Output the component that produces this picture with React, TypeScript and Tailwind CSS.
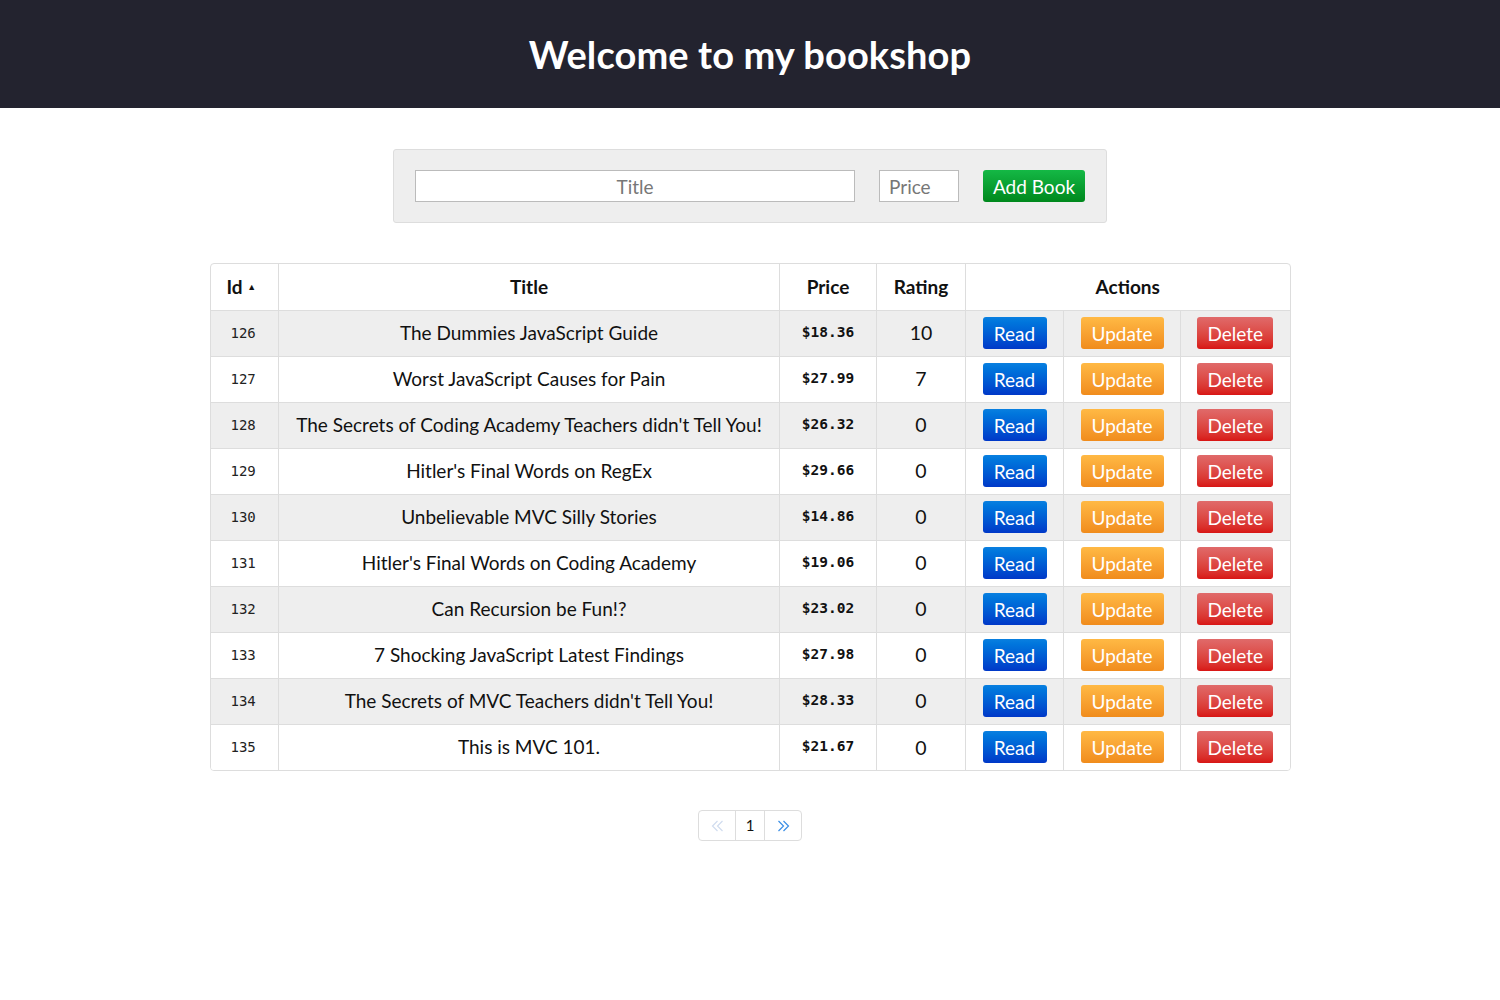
import React from "react";

const books = [
  { id: 126, title: "The Dummies JavaScript Guide", price: "$18.36", rating: 10 },
  { id: 127, title: "Worst JavaScript Causes for Pain", price: "$27.99", rating: 7 },
  { id: 128, title: "The Secrets of Coding Academy Teachers didn't Tell You!", price: "$26.32", rating: 0 },
  { id: 129, title: "Hitler's Final Words on RegEx", price: "$29.66", rating: 0 },
  { id: 130, title: "Unbelievable MVC Silly Stories", price: "$14.86", rating: 0 },
  { id: 131, title: "Hitler's Final Words on Coding Academy", price: "$19.06", rating: 0 },
  { id: 132, title: "Can Recursion be Fun!?", price: "$23.02", rating: 0 },
  { id: 133, title: "7 Shocking JavaScript Latest Findings", price: "$27.98", rating: 0 },
  { id: 134, title: "The Secrets of MVC Teachers didn't Tell You!", price: "$28.33", rating: 0 },
  { id: 135, title: "This is MVC 101.", price: "$21.67", rating: 0 },
];

const font = { fontFamily: "'Lato', 'Noto Sans', sans-serif" };

function Chevrons({ dir, color }: { dir: "left" | "right"; color: string }) {
  const d =
    dir === "left"
      ? "M6 1 L1 6 L6 11 M11 1 L6 6 L11 11"
      : "M1 1 L6 6 L1 11 M6 1 L11 6 L6 11";
  return (
    <svg width="13" height="12" viewBox="0 0 12 12" fill="none" stroke={color} strokeWidth="1.2">
      <path d={d} />
    </svg>
  );
}

export default function App() {
  return (
    <div className="min-h-screen bg-white text-[#111]" style={font}>
      <header className="h-[108px] bg-[#23232f] flex items-center justify-center">
        <h1 className="text-white text-[38px] font-bold tracking-[0.1px]">Welcome to my bookshop</h1>
      </header>

      <div className="flex justify-center mt-[41px]">
        <div className="w-[714px] h-[74px] bg-[#eeeeee] border border-[#dddddd] rounded-[3px] flex items-center pl-[21px] gap-[24px]">
          <input
            placeholder="Title"
            className="w-[440px] h-[32px] bg-white border border-[#bbbbbb] text-center text-[19px] placeholder:text-[#777] outline-none"
          />
          <input
            placeholder="Price"
            className="w-[80px] h-[32px] bg-white border border-[#bbbbbb] px-[9px] text-[19px] placeholder:text-[#777] outline-none"
          />
          <button className="w-[102px] h-[32px] rounded-[3px] bg-linear-to-b from-[#14b845] to-[#00881c] text-white text-[19px] leading-none">
            Add Book
          </button>
        </div>
      </div>

      <div className="flex justify-center mt-[40px]">
        <div className="w-[1081px] border border-[#dddddd] rounded-[4px] overflow-hidden">
          <table className="w-full table-fixed border-collapse">
            <colgroup>
              <col className="w-[68px]" />
              <col className="w-[501px]" />
              <col className="w-[97px]" />
              <col className="w-[89px]" />
              <col className="w-[98px]" />
              <col className="w-[117px]" />
              <col />
            </colgroup>
            <thead>
              <tr className="h-[46px]">
                <th className="text-left pl-[16px] text-[19px] font-bold border-r border-b border-[#dddddd]">
                  Id <span className="text-[9px] align-middle relative -top-[2px]">▲</span>
                </th>
                <th className="text-[19px] font-bold border-r border-b border-[#dddddd]">Title</th>
                <th className="text-[19px] font-bold border-r border-b border-[#dddddd]">Price</th>
                <th className="text-[19px] font-bold border-r border-b border-[#dddddd]">Rating</th>
                <th colSpan={3} className="text-[19px] font-bold border-b border-[#dddddd]">Actions</th>
              </tr>
            </thead>
            <tbody>
              {books.map((b, i) => {
                const last = i === books.length - 1;
                return (
                  <tr key={b.id} className={`h-[46px] ${i % 2 === 0 ? "bg-[#eeeeee]" : "bg-white"}`}>
                    <td
                      className={`pl-[20px] text-[14px] text-[#222] border-r border-[#dddddd] ${last ? "" : "border-b"}`}
                      style={{ fontFamily: "'DejaVu Sans Mono', monospace" }}
                    >
                      {b.id}
                    </td>
                    <td className={`text-center text-[19px] border-r border-[#dddddd] ${last ? "" : "border-b"}`}>
                      {b.title}
                    </td>
                    <td
                      className={`text-center text-[14.5px] font-bold border-r border-[#dddddd] ${last ? "" : "border-b"}`}
                      style={{ fontFamily: "'DejaVu Sans Mono', monospace" }}
                    >
                      {b.price}
                    </td>
                    <td className={`text-center text-[19.5px] border-r border-[#dddddd] ${last ? "" : "border-b"}`}>
                      {b.rating}
                    </td>
                    <td className={`text-center border-r border-[#dddddd] ${last ? "" : "border-b"}`}>
                      <button className="w-[64px] h-[32px] rounded-[3px] bg-linear-to-b from-[#0a80e0] to-[#0038c8] text-white text-[19px] leading-none align-middle">
                        Read
                      </button>
                    </td>
                    <td className={`text-center border-r border-[#dddddd] ${last ? "" : "border-b"}`}>
                      <button className="w-[83px] h-[32px] rounded-[3px] bg-linear-to-b from-[#ffb944] to-[#f08c1c] text-white text-[19px] leading-none align-middle">
                        Update
                      </button>
                    </td>
                    <td className={`text-center border-[#dddddd] ${last ? "" : "border-b"}`}>
                      <button className="w-[76px] h-[32px] rounded-[3px] bg-linear-to-b from-[#e06a6a] to-[#d81414] text-white text-[19px] leading-none align-middle">
                        Delete
                      </button>
                    </td>
                  </tr>
                );
              })}
            </tbody>
          </table>
        </div>
      </div>

      <div className="flex justify-center mt-[39px]">
        <div className="flex h-[31px] border border-[#dddddd] rounded-[4px] text-[15px]">
          <div className="w-[37px] flex items-center justify-center border-r border-[#dddddd]">
            <Chevrons dir="left" color="#d0dcef" />
          </div>
          <div className="w-[28px] flex items-center justify-center text-[#111]">1</div>
          <div className="w-[37px] flex items-center justify-center border-l border-[#dddddd]">
            <Chevrons dir="right" color="#3a8ee6" />
          </div>
        </div>
      </div>
    </div>
  );
}
